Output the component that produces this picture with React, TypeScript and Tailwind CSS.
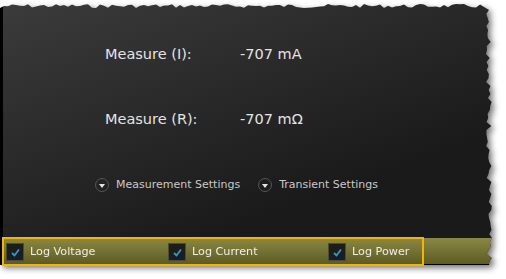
import React from 'react';

// jagged edge for the torn-paper look, seeded so it stays the same each render
function tornPolygon(w: number, h: number) {
  let seed = 7;
  const rnd = () => {
    seed = (seed * 9301 + 49297) % 233280;
    return seed / 233280;
  };
  const pts: string[] = [];
  pts.push(`0px ${h}px`);
  pts.push(`0px 4px`);
  for (let x = 4; x < w - 10; x += 4) {
    pts.push(`${x}px ${(rnd() * 4).toFixed(1)}px`);
  }
  for (let y = 6; y < h; y += 4) {
    pts.push(`${(w - 6 + rnd() * 6).toFixed(1)}px ${y}px`);
  }
  pts.push(`${w - 3}px ${h}px`);
  return `polygon(${pts.join(', ')})`;
}

function SettingsToggle({ label }: { label: string }) {
  return (
    <div className="flex items-center gap-[7px]">
      <div className="w-[14px] h-[14px] rounded-full border border-[#555] flex items-center justify-center">
        <div className="w-0 h-0 border-l-[3px] border-r-[3px] border-t-[4px] border-l-transparent border-r-transparent border-t-[#e5e5e5] mt-[1px]" />
      </div>
      <span className="text-[11px] text-[#c9c9c9]">{label}</span>
    </div>
  );
}

function LogCheck({ label }: { label: string }) {
  return (
    <div className="flex items-center gap-[6px]">
      <div className="w-[18px] h-[18px] bg-[#1d1e1c] border border-[#4b4b43] flex items-center justify-center">
        <svg width="11" height="11" viewBox="0 0 11 11">
          <path d="M2 6 L4.5 8.5 L9 2.5" fill="none" stroke="#2f9ad8" strokeWidth="1.8" />
        </svg>
      </div>
      <span className="text-[11.2px] text-[#efefe6]">{label}</span>
    </div>
  );
}

export default function App() {
  const clip = tornPolygon(492, 261);

  return (
    <div className="w-[506px] h-[279px] bg-white relative overflow-hidden font-['DejaVu_Sans',sans-serif]">
      <div className="pt-[4px] [filter:drop-shadow(3px_3px_3px_rgba(0,0,0,0.55))]">
        <div
          className="w-[492px] h-[261px] flex flex-col border-l-[3px] border-black bg-[linear-gradient(160deg,#3b3b3b,#1a1a1a_70%)]"
          style={{ clipPath: clip }}
        >
          <div className="flex flex-col pl-[102px] pt-[42px] gap-[49px]">
            <div className="flex text-[14.5px] text-[#e4e4e4] leading-[16px]">
              <span className="w-[135px]">Measure (I):</span>
              <span>-707 mA</span>
            </div>
            <div className="flex text-[14.5px] text-[#e4e4e4] leading-[16px]">
              <span className="w-[135px]">Measure (R):</span>
              <span>-707 mΩ</span>
            </div>
          </div>
          <div className="flex pl-[92px] pt-[50px] gap-[18px]">
            <SettingsToggle label="Measurement Settings" />
            <SettingsToggle label="Transient Settings" />
          </div>
          <div className="mt-auto h-[27px] border-b border-black bg-[linear-gradient(#8a8847,#5d5b21)] flex items-center pl-[3px] pt-[2px]">
            <div className="w-[162px]">
              <LogCheck label="Log Voltage" />
            </div>
            <div className="w-[160px]">
              <LogCheck label="Log Current" />
            </div>
            <LogCheck label="Log Power" />
          </div>
        </div>
      </div>
      <div className="absolute left-[2px] top-[237px] w-[422px] h-[29px] border-2 border-[#f4b400]" />
    </div>
  );
}
